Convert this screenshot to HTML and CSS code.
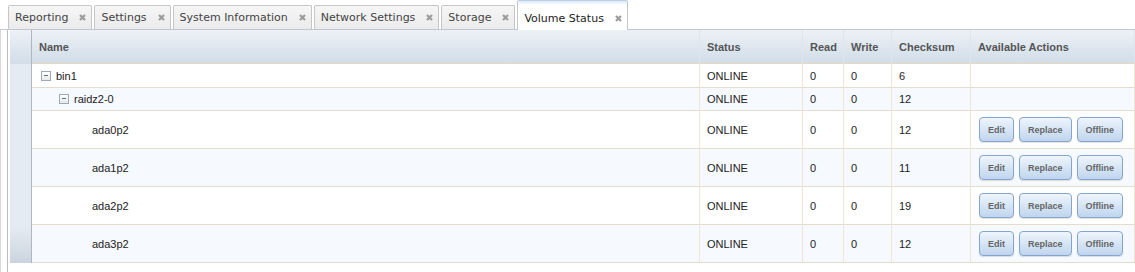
FILE: index.html
```html
<!DOCTYPE html>
<html lang="en">
<head>
    <meta charset="UTF-8">
    <title>Volume Status</title>
    <link rel="stylesheet" href="styles.css">
</head>
<body>
    <div class="tabbar">
        <div class="tab"><span>Reporting</span><svg class="close" viewBox="0 0 7 7"><path d="M1 1L6 6M6 1L1 6"/></svg></div>
        <div class="tab"><span>Settings</span><svg class="close" viewBox="0 0 7 7"><path d="M1 1L6 6M6 1L1 6"/></svg></div>
        <div class="tab"><span>System Information</span><svg class="close" viewBox="0 0 7 7"><path d="M1 1L6 6M6 1L1 6"/></svg></div>
        <div class="tab"><span>Network Settings</span><svg class="close" viewBox="0 0 7 7"><path d="M1 1L6 6M6 1L1 6"/></svg></div>
        <div class="tab"><span>Storage</span><svg class="close" viewBox="0 0 7 7"><path d="M1 1L6 6M6 1L1 6"/></svg></div>
        <div class="tab active"><span>Volume Status</span><svg class="close" viewBox="0 0 7 7"><path d="M1 1L6 6M6 1L1 6"/></svg></div>
    </div>

    <div class="panel">
        <div class="gutter"></div>
        <table class="grid">
            <colgroup>
                <col class="c-num">
                <col class="c-name">
                <col class="c-status">
                <col class="c-read">
                <col class="c-write">
                <col class="c-check">
                <col class="c-actions">
            </colgroup>
            <thead>
                <tr>
                    <th class="num"></th>
                    <th>Name</th>
                    <th>Status</th>
                    <th>Read</th>
                    <th>Write</th>
                    <th>Checksum</th>
                    <th>Available Actions</th>
                </tr>
            </thead>
            <tbody>
                <tr class="pool">
                    <td class="num"></td>
                    <td><div class="node level-0"><span class="toggle"></span>bin1</div></td>
                    <td>ONLINE</td>
                    <td>0</td>
                    <td>0</td>
                    <td>6</td>
                    <td></td>
                </tr>
                <tr class="vdev alt">
                    <td class="num"></td>
                    <td><div class="node level-1"><span class="toggle"></span>raidz2-0</div></td>
                    <td>ONLINE</td>
                    <td>0</td>
                    <td>0</td>
                    <td>12</td>
                    <td></td>
                </tr>
                <tr class="disk">
                    <td class="num"></td>
                    <td><div class="node level-2 leaf">ada0p2</div></td>
                    <td>ONLINE</td>
                    <td>0</td>
                    <td>0</td>
                    <td>12</td>
                    <td><div class="actions"><button>Edit</button><button>Replace</button><button>Offline</button></div></td>
                </tr>
                <tr class="disk alt">
                    <td class="num"></td>
                    <td><div class="node level-2 leaf">ada1p2</div></td>
                    <td>ONLINE</td>
                    <td>0</td>
                    <td>0</td>
                    <td>11</td>
                    <td><div class="actions"><button>Edit</button><button>Replace</button><button>Offline</button></div></td>
                </tr>
                <tr class="disk">
                    <td class="num"></td>
                    <td><div class="node level-2 leaf">ada2p2</div></td>
                    <td>ONLINE</td>
                    <td>0</td>
                    <td>0</td>
                    <td>19</td>
                    <td><div class="actions"><button>Edit</button><button>Replace</button><button>Offline</button></div></td>
                </tr>
                <tr class="disk alt last">
                    <td class="num"></td>
                    <td><div class="node level-2 leaf">ada3p2</div></td>
                    <td>ONLINE</td>
                    <td>0</td>
                    <td>0</td>
                    <td>12</td>
                    <td><div class="actions"><button>Edit</button><button>Replace</button><button>Offline</button></div></td>
                </tr>
            </tbody>
        </table>
    </div>
</body>
</html>
```

FILE: styles.css
```css
:root {
    --tab-border: #c6c6c6;
    --row-line: #e6dccb;
    --row-alt: #f6f9fd;
    --head-text: #555555;
    --text: #222222;
}

* {
    box-sizing: border-box;
}

body {
    margin: 0;
    background: #ffffff;
    color: var(--text);
    overflow: hidden;
    font-family: "Liberation Sans", Arial, sans-serif;
}

/* tabs */

.tabbar {
    display: flex;
    align-items: flex-end;
    height: 30px;
    padding-left: 8px;
    border-bottom: 1px solid #c3c8d0;
}

.tab {
    display: flex;
    align-items: center;
    gap: 11px;
    height: 24px;
    padding: 0 5px 0 6px;
    margin-right: 2px;
    border: 1px solid var(--tab-border);
    border-bottom: none;
    border-radius: 2px 2px 0 0;
    background: linear-gradient(#f6f6f6, #ebebeb);
    font-family: "DejaVu Sans", Verdana, sans-serif;
    font-size: 11px;
    color: #444444;
}

.tab.active {
    height: 30px;
    margin-right: 0;
    margin-bottom: -1px;
    padding-top: 5px;
    border-top-color: #b9cfe8;
    background: linear-gradient(#dde9f6 0, #ffffff 4px);
    color: #222222;
}

.close {
    width: 7px;
    height: 7px;
    stroke: #9c9c9c;
    stroke-width: 2.2;
    fill: none;
}

/* panel + grid */

.panel {
    display: flex;
    align-items: flex-start;
    height: 242px;
}

.gutter {
    width: 8px;
    height: 100%;
    margin-right: 2px;
    border-left: 1px solid #dadada;
    border-right: 1px solid #bcbcbc;
}

.grid {
    width: 1125px;
    table-layout: fixed;
    border-collapse: separate;
    border-spacing: 0;
    font-size: 11px;
}

.c-num { width: 22px; }
.c-name { width: 668px; }
.c-status { width: 103px; }
.c-read { width: 41px; }
.c-write { width: 48px; }
.c-check { width: 79px; }
.c-actions { width: 164px; }

.grid th {
    height: 34px;
    padding: 0 7px;
    text-align: left;
    font-weight: bold;
    color: var(--head-text);
    background: linear-gradient(#ecf1f7, #d1dde8);
    border-right: 1px solid #dfe5ec;
    border-bottom: 1px solid #e6d8bf;
}

.grid td {
    padding: 0 7px;
    white-space: nowrap;
    border-right: 1px solid #eee5d5;
    border-bottom: 1px solid var(--row-line);
}

.grid .num {
    padding: 0;
    border-right: 1px solid #aeb6c0;
    border-bottom: none;
}

.grid td.num {
    background: #e4ebf2;
}

.grid tr.last td.num {
    background: linear-gradient(#e6ecf3, #cbd4de);
}

.pool td { height: 24px; }
.vdev td { height: 23px; }
.disk td { height: 38px; }

.alt td {
    background: var(--row-alt);
}

/* tree */

.node {
    display: flex;
    align-items: center;
    gap: 5px;
    padding-left: 2px;
}

.level-1 { padding-left: 20px; }
.level-2 { padding-left: 53px; }

.toggle {
    position: relative;
    width: 10px;
    height: 10px;
    border: 1px solid #9ea8b6;
    background: linear-gradient(#ffffff, #e6e8ec);
}

.toggle::after {
    content: "";
    position: absolute;
    left: 2px;
    top: 3px;
    width: 4px;
    height: 1px;
    background: #667080;
}

/* buttons */

.actions {
    display: flex;
    gap: 5px;
    padding-left: 1px;
}

.actions button {
    height: 25px;
    padding: 0 8px;
    border: 1px solid #85a6ca;
    border-radius: 4px;
    background: linear-gradient(#eef5fc, #bfd5ee);
    box-shadow: 0 1px 1px rgba(0, 0, 0, 0.12);
    font-family: "Liberation Sans", Arial, sans-serif;
    font-size: 9px;
    font-weight: bold;
    color: #666666;
}
```
